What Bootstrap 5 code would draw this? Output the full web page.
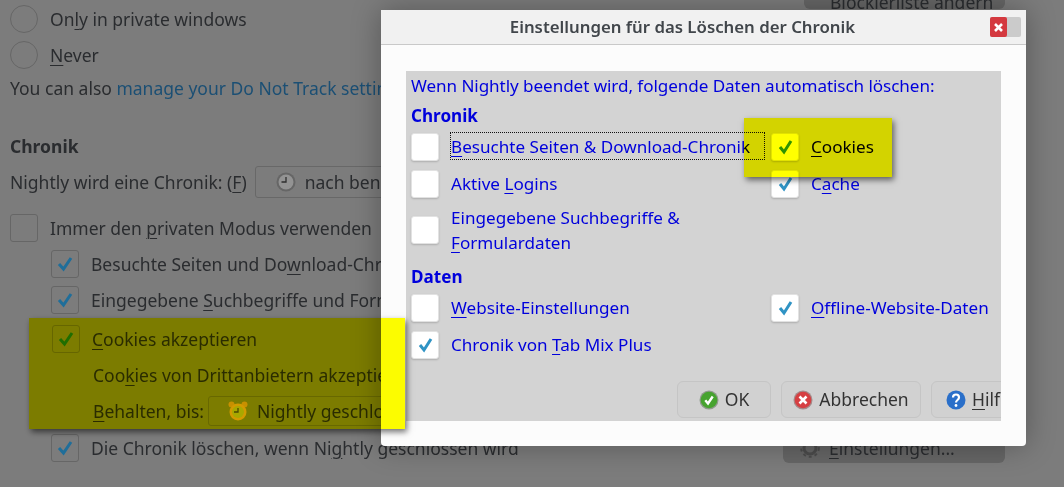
<!DOCTYPE html>
<html lang="de">
  <head>
    <meta charset="UTF-8" />
    <meta name="viewport" content="width=device-width, initial-scale=1.0" />
    <title>Einstellungen für das Löschen der Chronik</title>
    <link rel="stylesheet" href="https://cdn.jsdelivr.net/npm/bootstrap@5.3.3/dist/css/bootstrap.min.css" />
    <script src="https://cdn.jsdelivr.net/npm/bootstrap@5.3.3/dist/js/bootstrap.bundle.min.js"></script>
    <style>
      html, body { height: 487px; overflow: hidden; }
      body { background: #7c7c7c; color: #2a2c2f; font-family: "Noto Sans", "Open Sans", sans-serif; font-size: 17.5px; position: relative; }
      u { text-underline-offset: 3px; text-decoration-thickness: 1px; }

      /* dimmed preferences page */
      .prefs-page { padding: 1px 59px 0 10px; }
      .pref-row { height: 36px; white-space: nowrap; }
      .pref-row.h-text { height: 30px; }
      .pref-row.gap-top { margin-top: 10px; }
      .pref-head { margin-top: 25px; font-weight: 700; }
      .sub-rows { padding-left: 41px; }
      .pref-link { color: #1b4f74; }
      .radio-dot { width: 28px; height: 28px; border: 1px solid #666; border-radius: 50%; margin-right: 12px; flex: none; }
      .tick-box { width: 28px; height: 28px; border: 1px solid #666; border-radius: 3px; margin-right: 12px; flex: none; display: flex; align-items: center; justify-content: center; }
      .tick-box svg { width: 18px; height: 16px; fill: none; stroke: #1f6e9a; stroke-width: 3; }
      .pref-select { height: 32px; border: 1px solid #686868; border-radius: 3px; padding-left: 20px; margin-left: 8px; width: 300px; gap: 9px; flex: none; }
      .prefs-page .pref-btn { background-color: #666; color: #2a2c2f; height: 30px; flex: none; font-size: 17.5px; }
      .prefs-page .top-btn { width: 201px; margin-top: -22px; padding: 0 0 0 26px; line-height: 14px; }
      .prefs-page .gear-btn { width: 222px; padding: 0 0 0 17px; gap: 9px; }
      .cookie-block { margin-left: 19px; padding: 3px 0 0 23px; height: 112px; margin-right: 300px; }
      .cookie-block .pref-row { height: 36px; }
      .cookie-block .pref-select { margin-left: 4px; height: 30px; padding-left: 19px; }
      .cookie-indent { padding-left: 41px; }

      /* dialog */
      .hist-dialog { position: absolute; left: 381px; top: 10px; width: 645px; height: 436px; background: #fcfcfc; border-radius: 0 0 4px 4px; box-shadow: 0 0 30px rgba(0, 0, 0, .3); overflow: hidden; }
      .hist-title { height: 35px; background: #f1f1f1; border-bottom: 1px solid #c9c9c9; color: #41464b; font-weight: 600; font-size: 16.8px; padding-right: 42px; position: relative; }
      .win-btns { position: absolute; left: 609px; top: 7px; width: 31px; height: 20px; background: #cbcbcb; border-radius: 2px; }
      .win-close { width: 17px; height: 20px; background: #d4393f; border-radius: 2px; color: #fff; }
      .win-close svg { width: 9px; height: 9px; stroke: #fff; stroke-width: 2.6; }
      .hist-panel { position: absolute; left: 25px; top: 61px; width: 595px; height: 350px; background: #d3d3d3; color: #0000dc; overflow: hidden; padding: 4px 5px 0; font-size: 17.1px; }
      .hist-line { height: 22px; line-height: 22px; white-space: nowrap; letter-spacing: -.07px; }
      .hist-head { font-weight: 700; height: 22px; line-height: 22px; margin-top: 8px; }
      .hist-grid { display: grid; grid-template-columns: 360px 1fr; margin-top: 1px; }
      .hist-grid.grid-chronik { grid-template-rows: 37px 37px 56px; }
      .hist-grid.grid-daten { grid-template-rows: 37px 37px; }
      .hist-item { white-space: nowrap; }
      .hist-item.two-line { line-height: 25px; }
      .white-box { width: 28px; height: 28px; background: #fff; border: 1px solid #e2e2e2; border-radius: 3px; box-shadow: 0 1px 2px rgba(0, 0, 0, .18); margin-right: 12px; flex: none; display: flex; align-items: center; justify-content: center; }
      .white-box svg { width: 17px; height: 16px; fill: none; stroke: #2f93c4; stroke-width: 3; }
      .hist-foot { position: absolute; right: -14px; top: 310px; gap: 10px; }
      .dlg-btn { height: 37px; background-color: #d1d1d1; border: 1px solid #c5c5c5; color: #333; font-size: 17.5px; gap: 6px; padding: 0; }
      .ok-btn { width: 94px; }
      .cancel-btn { width: 140px; }
      .help-btn { width: 84px; justify-content: flex-start !important; padding-left: 14px; }
      .ico { width: 20px; height: 20px; flex: none; }

      /* highlight marks on top of everything, multiplied like a marker */
      .marker { position: absolute; background: #ffff00; mix-blend-mode: multiply; box-shadow: 2px 3px 6px rgba(0, 0, 0, .55); }
      .mark-page { left: 29px; top: 318px; width: 376px; height: 111px; }
      .mark-dialog { left: 744px; top: 118px; width: 148px; height: 59px; }
      .focus-box { position: absolute; left: 450px; top: 132px; width: 315px; height: 28px; border: 1px dotted #111; }
    </style>
  </head>
  <body>
    <main class="prefs-page">
      <div class="pref-row d-flex align-items-center">
        <span class="radio-dot"></span><span>On<u>l</u>y in private windows</span>
        <span class="pref-btn top-btn btn border-0 d-flex align-items-end justify-content-start align-self-start ms-auto">Blockierliste ändern</span>
      </div>
      <div class="pref-row d-flex align-items-center">
        <span class="radio-dot"></span><span><u>N</u>ever</span>
      </div>
      <div class="pref-row h-text d-flex align-items-center">
        You can also&nbsp;<span class="pref-link">manage your Do Not Track settings</span>
      </div>
      <div class="pref-row pref-head d-flex align-items-center">Chronik</div>
      <div class="pref-row d-flex align-items-center">
        Nightly wird eine Chronik: (<u>F</u>)
        <span class="pref-select d-flex align-items-center">
          <svg class="ico" viewBox="0 0 20 20"><circle cx="10" cy="10" r="9.5" fill="#666"/><circle cx="10" cy="10" r="7.500" fill="#939393"/><path d="M10 5v5H5.500" fill="none" stroke="#2e2e2e" stroke-width="1.300"/></svg>
          nach benutzerdefinierten
        </span>
      </div>
      <div class="pref-row gap-top d-flex align-items-center">
        <span class="tick-box"></span><span>Immer den <u>p</u>rivaten Modus verwenden</span>
      </div>
      <div class="sub-rows">
        <div class="pref-row d-flex align-items-center">
          <span class="tick-box"><svg viewBox="0 0 18 16"><path d="M3 8l4.500 5L15 2"/></svg></span><span>Besuchte Seiten und Do<u>w</u>nload-Chronik</span>
        </div>
        <div class="pref-row d-flex align-items-center">
          <span class="tick-box"><svg viewBox="0 0 18 16"><path d="M3 8l4.500 5L15 2"/></svg></span><span>Eingegebene <u>S</u>uchbegriffe und Formulardaten</span>
        </div>
      </div>
      <div class="cookie-block">
        <div class="pref-row d-flex align-items-center">
          <span class="tick-box"><svg viewBox="0 0 18 16"><path d="M3 8l4.500 5L15 2"/></svg></span><span><u>C</u>ookies akzeptieren</span>
        </div>
        <div class="pref-row cookie-indent d-flex align-items-center">Coo<u>k</u>ies von Drittanbietern akzeptieren</div>
        <div class="pref-row cookie-indent d-flex align-items-center">
          <u>B</u>ehalten, bis:
          <span class="pref-select d-flex align-items-center">
            <svg class="ico" viewBox="0 0 20 20"><circle cx="3.500" cy="3.500" r="3" fill="#c8901a"/><circle cx="16.500" cy="3.500" r="3" fill="#c8901a"/><circle cx="10" cy="11" r="8.500" fill="#d29a1e"/><circle cx="10" cy="11" r="6" fill="#a8a838"/><path d="M10 7v4H6" fill="none" stroke="#4a4a10" stroke-width="1.300"/></svg>
            Nightly geschlossen wird
          </span>
        </div>
      </div>
      <div class="sub-rows">
        <div class="pref-row d-flex align-items-center">
          <span class="tick-box"><svg viewBox="0 0 18 16"><path d="M3 8l4.500 5L15 2"/></svg></span><span>Die Chronik löschen, wenn Ni<u>g</u>htly geschlossen wird</span>
          <span class="pref-btn gear-btn btn border-0 d-flex align-items-center justify-content-start ms-auto">
            <svg class="ico" viewBox="0 0 20 20"><circle cx="10" cy="10" r="6" fill="none" stroke="#4c4c4c" stroke-width="3"/><circle cx="10" cy="10" r="8.800" fill="none" stroke="#4c4c4c" stroke-width="2" stroke-dasharray="3 3"/></svg>
            <span><u>E</u>instellungen...</span>
          </span>
        </div>
      </div>
    </main>

    <section class="hist-dialog">
      <div class="hist-title d-flex align-items-center justify-content-center">
        Einstellungen für das Löschen der Chronik
        <span class="win-btns">
          <span class="win-close d-flex align-items-center justify-content-center">
            <svg viewBox="0 0 9 9"><path d="M1 1l7 7M8 1l-7 7"/></svg>
          </span>
        </span>
      </div>
      <div class="hist-panel">
        <div class="hist-line">Wenn Nightly beendet wird, folgende Daten automatisch löschen:</div>
        <div class="hist-head">Chronik</div>
        <div class="hist-grid grid-chronik">
          <div class="hist-item d-flex align-items-center"><span class="white-box"></span><span><u>B</u>esuchte Seiten &amp; Download-Chronik</span></div>
          <div class="hist-item d-flex align-items-center"><span class="white-box"><svg viewBox="0 0 17 16"><path d="M3 8l4 5 7-11"/></svg></span><span><u>C</u>ookies</span></div>
          <div class="hist-item d-flex align-items-center"><span class="white-box"></span><span>Aktive <u>L</u>ogins</span></div>
          <div class="hist-item d-flex align-items-center"><span class="white-box"><svg viewBox="0 0 17 16"><path d="M3 8l4 5 7-11"/></svg></span><span>C<u>a</u>che</span></div>
          <div class="hist-item two-line d-flex align-items-center"><span class="white-box"></span><span>Eingegebene Suchbegriffe &amp;<br /><u>F</u>ormulardaten</span></div>
        </div>
        <div class="hist-head">Daten</div>
        <div class="hist-grid grid-daten">
          <div class="hist-item d-flex align-items-center"><span class="white-box"></span><span><u>W</u>ebsite-Einstellungen</span></div>
          <div class="hist-item d-flex align-items-center"><span class="white-box"><svg viewBox="0 0 17 16"><path d="M3 8l4 5 7-11"/></svg></span><span><u>O</u>ffline-Website-Daten</span></div>
          <div class="hist-item d-flex align-items-center"><span class="white-box"><svg viewBox="0 0 17 16"><path d="M3 8l4 5 7-11"/></svg></span><span>Chronik von <u>T</u>ab Mix Plus</span></div>
        </div>
        <div class="hist-foot d-flex">
          <span class="btn dlg-btn ok-btn d-flex align-items-center justify-content-center">
            <svg class="ico" viewBox="0 0 20 20"><circle cx="10" cy="10" r="9.500" fill="#8f9a8c"/><circle cx="10" cy="10" r="8.300" fill="#46a32f"/><path d="M6.300 10.300l2.700 3.200 4.700-7" fill="none" stroke="#fff" stroke-width="2.400"/></svg>
            OK
          </span>
          <span class="btn dlg-btn cancel-btn d-flex align-items-center justify-content-center">
            <svg class="ico" viewBox="0 0 20 20"><circle cx="10" cy="10" r="9.500" fill="#a58a8a"/><circle cx="10" cy="10" r="8.300" fill="#d63f42"/><path d="M6.500 6.500l7 7M13.500 6.500l-7 7" stroke="#fff" stroke-width="2.600"/></svg>
            Abbrechen
          </span>
          <span class="btn dlg-btn help-btn d-flex align-items-center">
            <svg class="ico" viewBox="0 0 20 20"><circle cx="10" cy="10" r="9.500" fill="#2a6fc9"/><path d="M7 7.500c0-4 6-4 6 0 0 2.500-3 2.500-3 5" fill="none" stroke="#fff" stroke-width="2.200"/><circle cx="10" cy="15.500" r="1.400" fill="#fff"/></svg>
            <span><u>H</u>ilfe</span>
          </span>
        </div>
      </div>
    </section>

    <div class="focus-box"></div>
    <div class="marker mark-page"></div>
    <div class="marker mark-dialog"></div>
  </body>
</html>
